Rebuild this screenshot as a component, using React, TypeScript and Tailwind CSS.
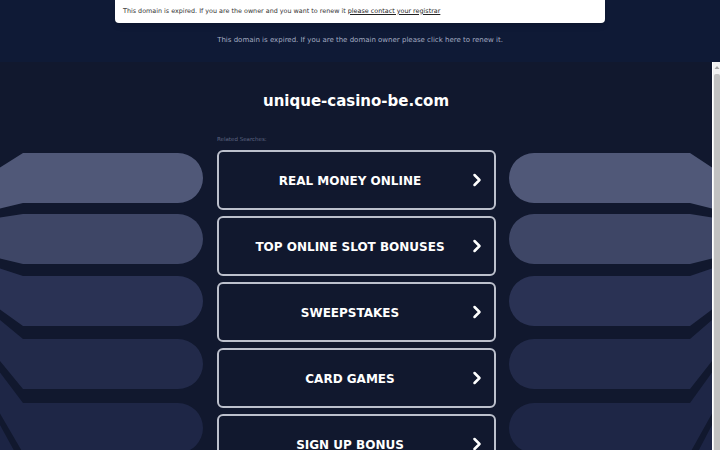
import { ChevronRight } from "lucide-react";

const searches = [
  "Real Money Online",
  "Top Online Slot Bonuses",
  "Sweepstakes",
  "Card Games",
  "Sign Up Bonus",
];

// stripe tops in page coordinates; every stripe is 50px tall
const stripes = [
  { top: 153, color: "#505878" },
  { top: 214, color: "#3e4666" },
  { top: 276, color: "#2a3254" },
  { top: 339, color: "#222a4a" },
  { top: 403, color: "#1e2646" },
  { top: 467, color: "#1c2444" },
];

const ROW_TOP = 132;
const skew = (y: number) => y + (234 - y) * 0.18;

function Stripes({ side }: { side: "left" | "right" }) {
  return (
    <svg width="203" height="390" viewBox="0 0 203 390" className="shrink-0">
      {stripes.map((s, i) => {
        const t = s.top - ROW_TOP;
        const b = s.top + 50 - ROW_TOP;
        const st = skew(s.top) - ROW_TOP;
        const sb = skew(s.top + 50) - ROW_TOP;
        const d =
          side == "left"
            ? `M0 ${st} L23 ${t} L178 ${t} A25 25 0 0 1 178 ${b} L23 ${b} L0 ${sb} Z`
            : `M203 ${st} L181 ${t} L25 ${t} A25 25 0 0 0 25 ${b} L181 ${b} L203 ${sb} Z`;
        return <path key={i} d={d} fill={s.color} />;
      })}
    </svg>
  );
}

function ScrollBar() {
  return (
    <div className="w-2 shrink-0 bg-[#f1f1f1] border-l border-white flex flex-col items-center">
      <svg width="6" height="8" viewBox="0 0 6 8" className="shrink-0 mt-[2px]">
        <path d="M3 2 L5.5 5 L0.5 5 Z" fill="#a3a3a3" />
      </svg>
      <div className="w-[6px] grow mt-[2px] bg-[#c1c1c1] rounded-t-[2px]" />
    </div>
  );
}

export default function App() {
  return (
    <div className="h-[450px] w-[720px] flex flex-col bg-[#11182e] font-['DejaVu_Sans',sans-serif] overflow-hidden">
      <div className="h-[62px] shrink-0 bg-[#0f1a36] flex flex-col items-center">
        <div className="w-[490px] h-[23px] bg-white rounded-b-[4px] shadow-md px-2 flex items-center text-[6.4px] text-[#333]">
          <span>
            This domain is expired. If you are the owner and you want to renew it{" "}
            <a className="underline text-[#222]">please contact your registrar</a>
          </span>
        </div>
        <p className="mt-[12px] text-[7px] text-[#a3abc2]">
          This domain is expired. If you are the domain owner please click here to renew it.
        </p>
      </div>

      <div className="grow min-h-0 flex">
        <div className="w-[712px] shrink-0 overflow-hidden">
          <h1 className="pt-[29px] h-[70px] text-center text-white font-bold text-[15px] leading-[20px]">
            unique-casino-be.com
          </h1>
          <div className="flex pb-6">
            <Stripes side="left" />
            <div className="w-[279px] ml-[14px] mr-[13px] shrink-0">
              <p className="h-[18px] pt-[3px] text-[5.5px] text-[#5d6582]">Related Searches:</p>
              <div className="flex flex-col gap-[6px]">
                {searches.map((item) => (
                  <a
                    key={item}
                    className="h-[60px] flex items-center border-2 border-[#bcc0cc] rounded-[6px] pl-[14px] pr-[7px] text-white"
                  >
                    <span className="flex-1 pt-[1px] text-center font-bold text-[12px] uppercase">
                      {item}
                    </span>
                    <ChevronRight size={20} strokeWidth={3} />
                  </a>
                ))}
              </div>
            </div>
            <Stripes side="right" />
          </div>
        </div>
        <ScrollBar />
      </div>
    </div>
  );
}
